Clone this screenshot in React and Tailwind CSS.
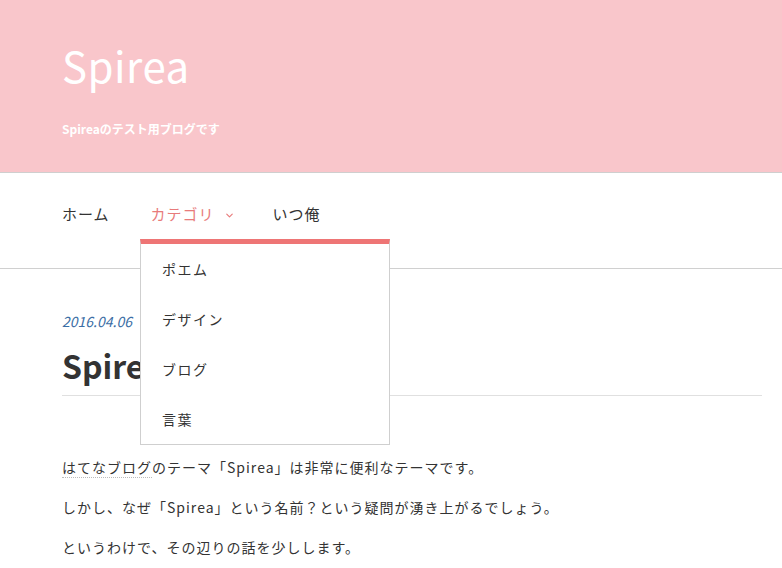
import React from 'react';
import { ChevronDown } from 'lucide-react';

const font = { fontFamily: '"Noto Sans CJK JP", "Noto Sans", sans-serif' };

const navItems = [
  { label: 'ホーム' },
  { label: 'カテゴリ', active: true },
  { label: 'いつ俺' },
];

const categories = ['ポエム', 'デザイン', 'ブログ', '言葉'];

export default function App() {
  return (
    <div className="relative min-h-[568px] bg-white text-[#333]" style={font}>
      <header className="h-[173px] bg-[#f9c6cb] border-b border-[#cfcfcf] pl-[62px] pt-[37px]">
        <h1 className="text-[42px] leading-[56px] text-white font-normal tracking-[0.5px]">Spirea</h1>
        <p className="mt-[27px] text-[12px] font-bold text-white">Spireaのテスト用ブログです</p>
      </header>

      <nav className="h-[96px] border-b border-[#d0d0d0] flex items-center pl-[62px] pb-[12px]">
        {navItems.map((item, i) => (
          <div
            key={item.label}
            className={
              'flex items-center gap-[9px] text-[15px] tracking-[1px] ' +
              (i > 0 ? 'ml-[41px] ' : '') +
              (item.active ? 'text-[#e87b7b] mr-[-3px]' : 'text-[#333]')
            }
          >
            <span>{item.label}</span>
            {item.active && <ChevronDown size={11} strokeWidth={2.5} className="mt-[2px]" />}
          </div>
        ))}
      </nav>

      <div className="absolute left-[140px] top-[239px] w-[250px] bg-white border border-[#cfcfcf] border-t-[5px] border-t-[#ee7575] z-10">
        {categories.map((c) => (
          <div key={c} className="h-[50px] flex items-center pl-[21px] text-[14px] tracking-[1.5px] text-[#333]">
            {c}
          </div>
        ))}
      </div>

      <main className="pl-[62px] pr-[20px] pt-[42px]">
        <div className="text-[14px] italic text-[#3b6ea5] leading-[20px]">2016.04.06</div>
        <h2 className="mt-[12px] pb-[8px] text-[32px] font-bold leading-[44px] text-[#333] border-b border-[#e0e0e0]">
          Spirea
        </h2>
        <div className="mt-[61px] text-[14px] leading-[20px] tracking-[1px] space-y-[20px]">
          <p>
            <span className="border-b border-dotted border-[#bbb]">はてなブログ</span>のテーマ「Spirea」は非常に便利なテーマです。
          </p>
          <p>しかし、なぜ「Spirea」という名前？という疑問が湧き上がるでしょう。</p>
          <p>というわけで、その辺りの話を少しします。</p>
        </div>
      </main>
    </div>
  );
}
